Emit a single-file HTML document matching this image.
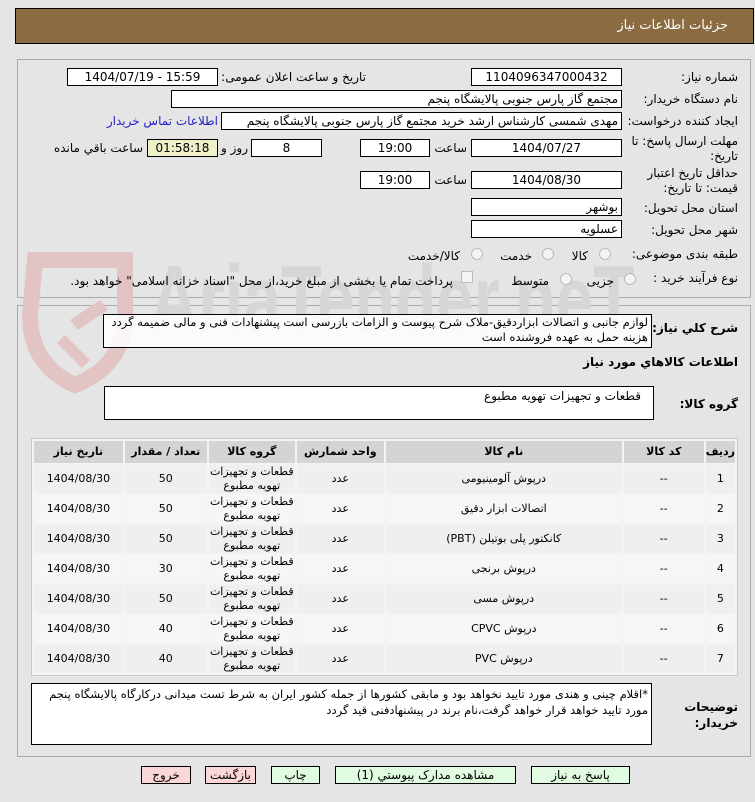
<!DOCTYPE html>
<html><head><meta charset="utf-8"><style>
body{margin:0;width:755px;height:802px;background:#e5e5e5;font-family:"DejaVu Sans","Liberation Sans",sans-serif;font-size:12px;color:#000;position:relative;overflow:hidden}
.a{position:absolute}
.box{position:absolute;background:#fff;border:1px solid #000;box-sizing:border-box;text-align:center;line-height:16px;white-space:nowrap;overflow:hidden}
.lbl{position:absolute;white-space:nowrap;direction:rtl;text-align:right}
.r{direction:rtl;text-align:right;padding-right:3px}
table{border-collapse:separate;border-spacing:2px;position:absolute;left:31px;top:438px;width:707px;background:#f4f4f4;border:1px solid #c8c8c8;direction:rtl}
td,th{text-align:center;font-size:11px;padding:0;line-height:14px}
th{background:#d4d4d4;height:22px;font-weight:bold}
td{background:#efefef;height:28px}
tr:nth-child(odd) td{background:#f6f6f6}
.btn{position:absolute;top:766px;height:18px;border:1px solid #000;box-sizing:border-box;text-align:center;line-height:16px;font-size:12px;background:#e0fbe0;white-space:nowrap}
.pk{background:#fbd6d6}
.rad{position:absolute;width:10px;height:10px;border:1px solid #bbb;border-radius:50%;background:#f4f4f4}
</style></head><body>
<div class="a" style="left:15px;top:8px;width:739px;height:36px;background:#8b6b42;border:1px solid #000;box-sizing:border-box"></div>
<div class="lbl" style="right:27px;top:18px;color:#fff;font-size:13px">جزئیات اطلاعات نیاز</div>

<div class="a" style="left:17px;top:59px;width:734px;height:239px;border:1px solid #aaa;box-sizing:border-box"></div>
<div class="a" style="left:17px;top:305px;width:734px;height:452px;border:1px solid #aaa;box-sizing:border-box"></div>

<!-- watermark -->
<svg class="a" style="left:15px;top:245px" width="140" height="150"><path d="M20 15 L110 15 L110 70 Q110 120 60 140 Q15 120 15 70 Z" fill="none" stroke="#e2c4c4" stroke-width="16"/><path d="M55 75 l30 -20 l8 10 l-30 20z M50 90 l25 25 l-8 8 l-25 -25z" fill="#e2c4c4"/></svg>
<div class="a" style="left:150px;top:245px;font-size:96px;font-weight:bold;color:#d6d6d6;font-family:'Liberation Sans',sans-serif;line-height:110px;transform:scaleX(0.7);transform-origin:left top;white-space:nowrap">AriaTender.neT</div>

<div class="lbl" style="right:17px;top:70px">شماره نیاز:</div>
<div class="box" style="left:471px;top:68px;width:151px;height:18px">1104096347000432</div>
<div class="lbl" style="right:389px;top:70px">تاریخ و ساعت اعلان عمومی:</div>
<div class="box" style="left:67px;top:68px;width:151px;height:18px">1404/07/19 - 15:59</div>

<div class="lbl" style="right:17px;top:92px">نام دستگاه خریدار:</div>
<div class="box r" style="left:171px;top:90px;width:451px;height:18px">مجتمع گاز پارس جنوبی  پالایشگاه پنجم</div>

<div class="lbl" style="right:17px;top:114px">ایجاد کننده درخواست:</div>
<div class="box r" style="left:221px;top:112px;width:401px;height:18px">مهدی شمسی کارشناس ارشد خرید مجتمع گاز پارس جنوبی  پالایشگاه پنجم</div>
<div class="lbl" style="right:537px;top:114px;color:#2222cc">اطلاعات تماس خریدار</div>

<div class="lbl" style="right:17px;top:134px;line-height:15px">مهلت ارسال پاسخ: تا<br>تاریخ:</div>
<div class="box" style="left:471px;top:139px;width:151px;height:18px">1404/07/27</div>
<div class="lbl" style="right:288px;top:141px">ساعت</div>
<div class="box" style="left:360px;top:139px;width:70px;height:18px">19:00</div>
<div class="box" style="left:251px;top:139px;width:71px;height:18px">8</div>
<div class="lbl" style="right:507px;top:141px">روز و</div>
<div class="box" style="left:147px;top:139px;width:71px;height:18px;background:#f0f0c8">01:58:18</div>
<div class="lbl" style="right:612px;top:141px">ساعت باقي مانده</div>

<div class="lbl" style="right:17px;top:166px;line-height:15px">حداقل تاریخ اعتبار<br>قیمت: تا تاریخ:</div>
<div class="box" style="left:471px;top:171px;width:151px;height:18px">1404/08/30</div>
<div class="lbl" style="right:288px;top:173px">ساعت</div>
<div class="box" style="left:360px;top:171px;width:70px;height:18px">19:00</div>

<div class="lbl" style="right:17px;top:201px">استان محل تحویل:</div>
<div class="box r" style="left:471px;top:198px;width:151px;height:18px">بوشهر</div>
<div class="lbl" style="right:17px;top:223px">شهر محل تحویل:</div>
<div class="box r" style="left:471px;top:220px;width:151px;height:18px">عسلویه</div>

<div class="lbl" style="right:17px;top:247px">طبقه بندی موضوعی:</div>
<div class="rad" style="left:599px;top:248px"></div><div class="lbl" style="right:167px;top:249px">کالا</div>
<div class="rad" style="left:542px;top:248px"></div><div class="lbl" style="right:223px;top:249px">خدمت</div>
<div class="rad" style="left:471px;top:248px"></div><div class="lbl" style="right:295px;top:249px">کالا/خدمت</div>

<div class="lbl" style="right:17px;top:271px">نوع فرآیند خرید :</div>
<div class="rad" style="left:624px;top:273px"></div><div class="lbl" style="right:141px;top:274px">جزیی</div>
<div class="rad" style="left:560px;top:273px"></div><div class="lbl" style="right:206px;top:274px">متوسط</div>
<div class="a" style="left:461px;top:271px;width:10px;height:10px;border:1px solid #bbb;background:#f4f4f4"></div>
<div class="lbl" style="right:302px;top:274px">پرداخت تمام یا بخشی از مبلغ خرید،از محل "اسناد خزانه اسلامی" خواهد بود.</div>

<div class="lbl" style="right:17px;top:321px;font-weight:bold">شرح کلي نياز:</div>
<div class="box r" style="left:103px;top:314px;width:549px;height:34px;white-space:normal;text-align:right;line-height:15px;background:rgba(255,255,255,.85);font-size:11.5px">لوازم جانبی و اتصالات ابزاردقیق-ملاک شرح پیوست و الزامات بازرسی است پیشنهادات فنی و مالی ضمیمه گردد هزینه حمل به عهده فروشنده است</div>
<div class="lbl" style="right:17px;top:355px;font-weight:bold">اطلاعات کالاهاي مورد نياز</div>
<div class="lbl" style="right:17px;top:397px;font-weight:bold">گروه کالا:</div>
<div class="box r" style="left:104px;top:386px;width:550px;height:34px;text-align:right;line-height:18px;padding-right:12px">قطعات و تجهیزات تهویه مطبوع</div>

<table>
<tr><th style="width:27px">ردیف</th><th style="width:80px">کد کالا</th><th style="width:236px">نام کالا</th><th style="width:87px">واحد شمارش</th><th style="width:86px">گروه کالا</th><th style="width:82px">تعداد / مقدار</th><th>تاریخ نیاز</th></tr>
<tr><td>1</td><td>--</td><td>درپوش آلومینیومی</td><td>عدد</td><td>قطعات و تجهیزات<br>تهویه مطبوع</td><td>50</td><td>1404/08/30</td></tr>
<tr><td>2</td><td>--</td><td>اتصالات ابزار دقیق</td><td>عدد</td><td>قطعات و تجهیزات<br>تهویه مطبوع</td><td>50</td><td>1404/08/30</td></tr>
<tr><td>3</td><td>--</td><td>کانکتور پلی بوتیلن (PBT)</td><td>عدد</td><td>قطعات و تجهیزات<br>تهویه مطبوع</td><td>50</td><td>1404/08/30</td></tr>
<tr><td>4</td><td>--</td><td>درپوش برنجی</td><td>عدد</td><td>قطعات و تجهیزات<br>تهویه مطبوع</td><td>30</td><td>1404/08/30</td></tr>
<tr><td>5</td><td>--</td><td>درپوش مسی</td><td>عدد</td><td>قطعات و تجهیزات<br>تهویه مطبوع</td><td>50</td><td>1404/08/30</td></tr>
<tr><td>6</td><td>--</td><td>درپوش CPVC</td><td>عدد</td><td>قطعات و تجهیزات<br>تهویه مطبوع</td><td>40</td><td>1404/08/30</td></tr>
<tr><td>7</td><td>--</td><td>درپوش PVC</td><td>عدد</td><td>قطعات و تجهیزات<br>تهویه مطبوع</td><td>40</td><td>1404/08/30</td></tr>
</table>

<div class="lbl" style="right:17px;top:699px;font-weight:bold;line-height:16px">توضیحات<br>خریدار:</div>
<div class="box r" style="left:31px;top:683px;width:621px;height:62px;white-space:normal;text-align:right;line-height:16px;padding-top:2px;font-size:11.5px">*اقلام چینی و هندی مورد تایید نخواهد بود و مابقی کشورها از جمله کشور ایران به شرط تست میدانی  درکارگاه پالایشگاه پنجم مورد تایید خواهد قرار خواهد گرفت،نام برند در پیشنهادفنی قید گردد</div>

<div class="btn" style="left:531px;width:99px">پاسخ به نیاز</div>
<div class="btn" style="left:335px;width:181px">مشاهده مدارک پیوستي (1)</div>
<div class="btn" style="left:271px;width:49px">چاپ</div>
<div class="btn pk" style="left:205px;width:51px">بازگشت</div>
<div class="btn pk" style="left:141px;width:50px">خروج</div>
</body></html>
